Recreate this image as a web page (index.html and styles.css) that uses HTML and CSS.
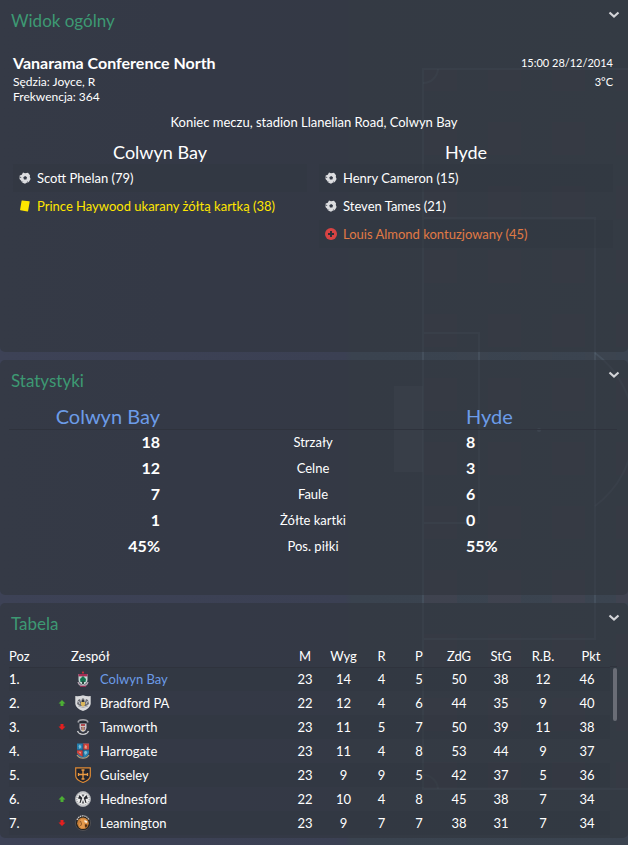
FILE: index.html
```html
<!DOCTYPE html>
<html lang="pl">
<head>
<meta charset="utf-8">
<meta name="viewport" content="width=device-width, initial-scale=1">
<title>Colwyn Bay – Hyde</title>
<link rel="stylesheet" href="styles.css">
</head>
<body>
<svg class="pitch" width="234" height="845" viewBox="0 0 234 845" aria-hidden="true">
  <defs>
    <pattern id="turf" x="30" y="58" width="64" height="64" patternUnits="userSpaceOnUse">
      <rect width="33" height="33" fill="#5a4050" opacity=".14"/>
      <rect x="33" y="33" width="31" height="31" fill="#5a4050" opacity=".03"/>
    </pattern>
  </defs>
  <rect x="29" y="69" width="400" height="720" fill="url(#turf)"/>
  <rect x="0" y="386" width="29" height="86" fill="#7a8494" opacity=".16"/>
  <g fill="none" stroke="#75889a" stroke-opacity=".18" stroke-width="2">
    <path d="M234 69H29V789H234M29 218H201V639H29M29 333H85V523H29"/>
    <path d="M44 69A15 15 0 0 1 29 83M29 775A15 15 0 0 1 44 789M201 353A95 95 0 0 1 201 506"/>
  </g>
  <circle cx="145" cy="430" r="2" fill="#75889a" opacity=".4"/>
</svg>
<svg class="defs" aria-hidden="true">
  <symbol id="chevron" viewBox="0 0 12 8"><path d="M1.5 1.5L6 5.5L10.500 1.500" fill="none" stroke="#d3d4d8" stroke-width="2.200"/></symbol>
  <symbol id="ball" viewBox="0 0 12 12">
    <path d="M4 .6L6 1.200L9 .7L11 3.200L10.800 5L11.600 7L9.700 10.300L8 10.500L6 11.700L3 10.500L2.400 9L.5 7L.7 3.500L2.800 2.800Z" fill="#dcdde0"/>
    <path d="M6.200 4L8 5.300L7.400 7.400H5L4.300 5.300Z" fill="#343a46"/>
    <path d="M1 5.200L2.200 5.500M3.600 9.600L2.900 10.600M8.600 9.500L9.300 10.500" stroke="#343a46" stroke-width=".8"/>
  </symbol>
  <symbol id="card" viewBox="0 0 12 12"><path d="M2.600 .8Q2.700 .5 3.200 .6L10.300 1.200Q10.800 1.300 10.700 1.800L9.100 11Q9 11.500 8.500 11.400L1.500 10.200Q1 10.100 1.100 9.600Z" fill="#ffe600"/></symbol>
  <symbol id="injury" viewBox="0 0 12 12"><circle cx="6" cy="6" r="6" fill="#d84343"/><path d="M6 3V9M3 6H9" stroke="#2d3039" stroke-width="2"/></symbol>
  <symbol id="up" viewBox="0 0 8 6"><path d="M4 0L7.500 3.400H5.500V6H2.500V3.400H.5Z" fill="#4cae34"/></symbol>
  <symbol id="down" viewBox="0 0 8 6"><path d="M4 6L7.500 2.600H5.500V0H2.500V2.600H.5Z" fill="#e51f1f"/></symbol>
</svg>

<main class="page">
  <section class="panel overview">
    <header class="panel-head">
      <h2>Widok ogólny</h2>
      <button type="button" class="toggle" aria-label="Widok ogólny"><svg><use href="#chevron"/></svg></button>
    </header>
    <div class="match">
      <div class="match-info">
        <h3>Vanarama Conference North</h3>
        <p>Sędzia: Joyce, R</p>
        <p>Frekwencja: 364</p>
      </div>
      <div class="match-when">
        <time datetime="2014-12-28T15:00">15:00 28/12/2014</time>
        <p>3°C</p>
      </div>
    </div>
    <p class="status">Koniec meczu, stadion Llanelian Road, Colwyn Bay</p>
    <div class="sides">
      <div class="side">
        <h4>Colwyn Bay</h4>
        <ul>
          <li><svg><use href="#ball"/></svg>Scott Phelan (79)</li>
          <li class="booked"><svg><use href="#card"/></svg>Prince Haywood ukarany żółtą kartką (38)</li>
        </ul>
      </div>
      <div class="side">
        <h4>Hyde</h4>
        <ul>
          <li><svg><use href="#ball"/></svg>Henry Cameron (15)</li>
          <li><svg><use href="#ball"/></svg>Steven Tames (21)</li>
          <li class="injured"><svg><use href="#injury"/></svg>Louis Almond kontuzjowany (45)</li>
        </ul>
      </div>
    </div>
  </section>

  <section class="panel statistics">
    <header class="panel-head">
      <h2>Statystyki</h2>
      <button type="button" class="toggle" aria-label="Statystyki"><svg><use href="#chevron"/></svg></button>
    </header>
    <table class="stats">
      <thead><tr><th class="home"><a href="#">Colwyn Bay</a></th><td></td><th class="away"><a href="#">Hyde</a></th></tr></thead>
      <tbody>
        <tr><td class="home">18</td><th>Strzały</th><td class="away">8</td></tr>
        <tr><td class="home">12</td><th>Celne</th><td class="away">3</td></tr>
        <tr><td class="home">7</td><th>Faule</th><td class="away">6</td></tr>
        <tr><td class="home">1</td><th>Żółte kartki</th><td class="away">0</td></tr>
        <tr><td class="home">45%</td><th>Pos. piłki</th><td class="away">55%</td></tr>
      </tbody>
    </table>
  </section>

  <section class="panel standings">
    <header class="panel-head">
      <h2>Tabela</h2>
      <button type="button" class="toggle" aria-label="Tabela"><svg><use href="#chevron"/></svg></button>
    </header>
    <div class="league-wrap">
      <table class="league">
        <colgroup><col class="c-pos"><col class="c-move"><col><col class="c-m"><col class="c-w"><col class="c-d"><col class="c-l"><col class="c-g"><col class="c-g"><col class="c-g"><col class="c-p"></colgroup>
        <thead><tr><th class="pos">Poz</th><th></th><th class="team">Zespół</th><th>M</th><th>Wyg</th><th>R</th><th>P</th><th>ZdG</th><th>StG</th><th>R.B.</th><th class="pts">Pkt</th></tr></thead>
        <tbody>
          <tr><td class="pos">1.</td><td></td><td><div class="club">
            <svg viewBox="0 0 16 16"><path d="M8 0L9.200 1.500L8 3L6.800 1.500Z" fill="#c8323f"/><path d="M3.500 3H12.500V9Q12 12.500 8 14Q4 12.500 3.500 9Z" fill="#c3d6d2"/><path d="M3.500 3H12.500V5.400H3.500Z" fill="#a52d55"/><path d="M8 5L11 8L10.500 11H5.500L5 8Z" fill="#14734f"/><path d="M7 10H9V13H7Z" fill="#2c4a42"/><path d="M3 11Q4 14.700 8 14.500Q12 14.700 13 11" fill="none" stroke="#b7a5b3" stroke-width="1.200"/><path d="M5 15.300H11" stroke="#a52d55"/></svg>
            <a href="#">Colwyn Bay</a></div></td><td>23</td><td>14</td><td>4</td><td>5</td><td>50</td><td>38</td><td>12</td><td>46</td></tr>
          <tr><td class="pos">2.</td><td><svg class="move"><use href="#up"/></svg></td><td><div class="club">
            <svg viewBox="0 0 16 16"><path d="M.3 1Q4 1.500 8 .2Q12 1.500 15.700 1V9Q15 13.500 8 16Q1 13.500 .3 9Z" fill="#d9dadc"/><path d="M2 9L3 5L5 4L6 7L7 3.500H9L10 7L11 4L13 5L14 9L11 11H5Z" fill="#6b6c72"/><path d="M6 7H10V10L8 12L6 10Z" fill="#d9b65b"/><path d="M7 5H9V7H7Z" fill="#31343c"/><path d="M3 11Q8 14 13 11" fill="none" stroke="#a9abb0"/><path d="M3.500 6L5 9M12.500 6L11 9" stroke="#c7c9ce"/></svg>
            Bradford PA</div></td><td>22</td><td>12</td><td>4</td><td>6</td><td>44</td><td>35</td><td>9</td><td>40</td></tr>
          <tr><td class="pos">3.</td><td><svg class="move"><use href="#down"/></svg></td><td><div class="club">
            <svg viewBox="0 0 16 16"><path d="M3 3.500Q3.500 .8 8 .8Q12.500 .8 13 3.500" fill="none" stroke="#a3a4aa" stroke-width="1.400"/><path d="M5 2.500H11V4.500H5Z" fill="#24262d"/><path d="M4.500 4.500H11.500V9Q11 12 8 13Q5 12 4.500 9Z" fill="#c9c4ca"/><path d="M6 5H10V7H6Z" fill="#b14a4f"/><path d="M6 8H10L9.500 11H6.500Z" fill="#85516c"/><path d="M8 7.500V12" stroke="#e3c36f"/><path d="M2.500 12Q4 15.300 8 15.200Q12 15.300 13.500 12" fill="none" stroke="#c6c7cb" stroke-width="1.500"/><path d="M4 13Q8 15.500 12 13" fill="none" stroke="#33353d" stroke-width=".8"/></svg>
            Tamworth</div></td><td>23</td><td>11</td><td>5</td><td>7</td><td>50</td><td>39</td><td>11</td><td>38</td></tr>
          <tr><td class="pos">4.</td><td></td><td><div class="club">
            <svg viewBox="0 0 16 16"><path d="M2 .5H14V10Q12.500 14 8 15.500Q3.500 14 2 10Z" fill="#257fae"/><path d="M8 .5H14V7H8ZM2 7H8V14Q3.500 12 2 10Z" fill="#cf4038"/><path d="M3.500 3L5 1.500L6.500 4L4.500 6ZM9 9L11 7.500L12.500 10L10 12Z" fill="#7fbdd6"/><path d="M10 2L12 3L11.500 6L9.500 5ZM3.500 8.500L6 9L5.500 11Z" fill="#e2a08a"/><path d="M8 1V14M2 7H14" stroke="#1c466d" stroke-width=".8"/><path d="M2 12Q4 15.200 8 15.200Q12 15.200 14 12" fill="none" stroke="#b29a78" stroke-width="1.300"/></svg>
            Harrogate</div></td><td>23</td><td>11</td><td>4</td><td>8</td><td>53</td><td>44</td><td>9</td><td>37</td></tr>
          <tr><td class="pos">5.</td><td></td><td><div class="club">
            <svg viewBox="0 0 16 16"><path d="M.7 .8H15.300V9Q15 13 8 15.500Q1 13 .7 9Z" fill="#23252e" stroke="#df8b35" stroke-width="1.200"/><path d="M8 2.500V12.500M3 7.500H13M6.500 3H9.500M6.500 12H9.500M3.500 6V9M12.500 6V9" stroke="#eb9b43" stroke-width="1.300"/></svg>
            Guiseley</div></td><td>23</td><td>9</td><td>9</td><td>5</td><td>42</td><td>37</td><td>5</td><td>36</td></tr>
          <tr><td class="pos">6.</td><td><svg class="move"><use href="#up"/></svg></td><td><div class="club">
            <svg viewBox="0 0 16 16"><circle cx="8" cy="8" r="7.500" fill="#ececec" stroke="#a6a8ad"/><circle cx="8" cy="8" r="6.200" fill="none" stroke="#85888e" stroke-width="1" stroke-dasharray="1 1"/><path d="M4.500 4L7.300 7L5.500 12H4.500L5.500 8L3 7.500ZM11.500 4L8.700 7L10.500 12H11.500L10.500 8L13 7.500Z" fill="#25272d"/><path d="M6.500 3.500H9.500L8 6ZM8 9L9.300 12.500H6.700Z" fill="#55575d"/></svg>
            Hednesford</div></td><td>22</td><td>10</td><td>4</td><td>8</td><td>45</td><td>38</td><td>7</td><td>34</td></tr>
          <tr><td class="pos">7.</td><td><svg class="move"><use href="#down"/></svg></td><td><div class="club">
            <svg viewBox="0 0 16 16"><circle cx="8" cy="8" r="7.600" fill="#25231f" stroke="#55565a" stroke-width=".8"/><path d="M2 5Q4 .9 8 .9Q12 .9 14 5" fill="none" stroke="#cbccd0" stroke-width="1.200" stroke-dasharray="1.500 .7"/><circle cx="8" cy="8.300" r="5.800" fill="#c9803a"/><path d="M6 4L11 4.500L13 8L11 9L9 8L10 13L6 13.500L4 10Z" fill="#e49a4c"/><path d="M9.500 5L12.500 6.500L11.500 8L9.500 7Z" fill="#f4efe6"/><path d="M10.500 9L12.500 10L11 13L9.800 11Z" fill="#4b2c16"/><path d="M5.500 6L6.500 9L5.500 11" fill="none" stroke="#8a5526"/></svg>
            Leamington</div></td><td>23</td><td>9</td><td>7</td><td>7</td><td>38</td><td>31</td><td>7</td><td>34</td></tr>
        </tbody>
      </table>
      <div class="scroll"><div class="thumb"></div></div>
    </div>
  </section>
</main>
</body>
</html>
```
FILE: styles.css
```css
* { box-sizing: border-box; }

body {
  margin: 0;
  min-height: 100vh;
  background: linear-gradient(90deg, #3d4256 0%, #3b4053 55%, #3a434f 56%, #3b4450 100%);
  color: #fff;
  font: 13px/18px Lato, "Open Sans", sans-serif;
}

h2, h3, h4, p, ul { margin: 0; padding: 0; font-weight: 400; }
ul { list-style: none; }
a { color: #6c9ce8; text-decoration: none; }

.defs { position: absolute; width: 0; height: 0; }
.pitch { position: absolute; top: 0; right: 0; }

.page {
  position: relative;
  display: flex;
  flex-direction: column;
  gap: 8px;
}

.panel {
  border-radius: 5px;
  background: rgba(49, 53, 61, .62);
}
.overview { min-height: 352px; border-radius: 0 0 5px 5px; }
.statistics { min-height: 235px; }
.standings { padding-bottom: 3px; }

.panel-head {
  display: flex;
  justify-content: space-between;
  align-items: flex-start;
  height: 43px;
  padding: 9px 8px 0 11px;
}
.panel-head h2 { color: #3d9973; font-size: 17px; line-height: 24px; }

.toggle {
  display: flex;
  padding: 0;
  border: 0;
  background: none;
  cursor: pointer;
}
.toggle svg { width: 12px; height: 8px; margin-top: 2px; }

.match {
  display: flex;
  justify-content: space-between;
  padding: 8px 15px 0 13px;
  font-size: 12px;
  line-height: 15px;
}
.match h3 { font-size: 16px; line-height: 23px; font-weight: 700; }
.match-when { font-size: 11px; text-align: right; }
.match-when time { display: block; line-height: 23px; }

.status { margin-top: 9px; text-align: center; }

.sides {
  display: grid;
  grid-template-columns: 1fr 1fr;
  gap: 12px;
  padding: 9px 15px 0 13px;
}
.side h4 { font-size: 18px; line-height: 24px; text-align: center; }
.side li {
  display: flex;
  align-items: center;
  gap: 6px;
  height: 28px;
  padding-left: 6px;
}
.side li:nth-child(odd) { background: rgba(48, 54, 62, .35); }
.side li svg { width: 12px; height: 12px; }
.side .booked { color: #ffe600; }
.side .injured { color: #e07a45; }

table { border-collapse: collapse; table-layout: fixed; }
th, td { padding: 0; font-weight: 400; }

.stats { width: calc(100% - 20px); margin-left: 9px; }
.stats thead th { height: 26px; font-size: 20px; line-height: 24px; }
.stats thead { border-bottom: 1px solid #2f333d; }
.stats tbody tr { height: 26px; }
.stats tbody td { font-size: 16px; font-weight: 700; }
.stats .home { width: 25%; padding-right: 1px; text-align: right; }
.stats .away { width: 25%; padding-left: 1px; text-align: left; }

.league-wrap { display: flex; padding: 0 11px 0 9px; }
.league { flex: 1; width: 100%; text-align: center; }
.league thead tr { height: 21px; border-bottom: 1px solid #2f333d; }
.league tbody tr { height: 24px; }
.league tbody tr:nth-child(odd) { background: rgba(48, 54, 62, .35); }
.league .pos, .league .team { text-align: left; }
.league .team { padding-left: 4px; }
.league .pts { padding-left: 8px; }
.c-pos { width: 49px; }
.c-move { width: 9px; }
.c-m { width: 38px; }
.c-w { width: 39px; }
.c-d { width: 37px; }
.c-l { width: 38px; }
.c-g { width: 42px; }
.c-p { width: 46px; }
.league td.pos { font-weight: 500; }
.move { display: block; width: 8px; height: 6px; }
.club { display: flex; align-items: center; gap: 9px; padding-left: 8px; }
.club svg { width: 16px; height: 16px; }

.scroll { width: 7px; margin-top: 20px; padding: 1px 0 0 3px; border-top: 1px solid #2f333d; }
.thumb { width: 4px; height: 53px; border-radius: 2px; background: #6a6d76; }
```
